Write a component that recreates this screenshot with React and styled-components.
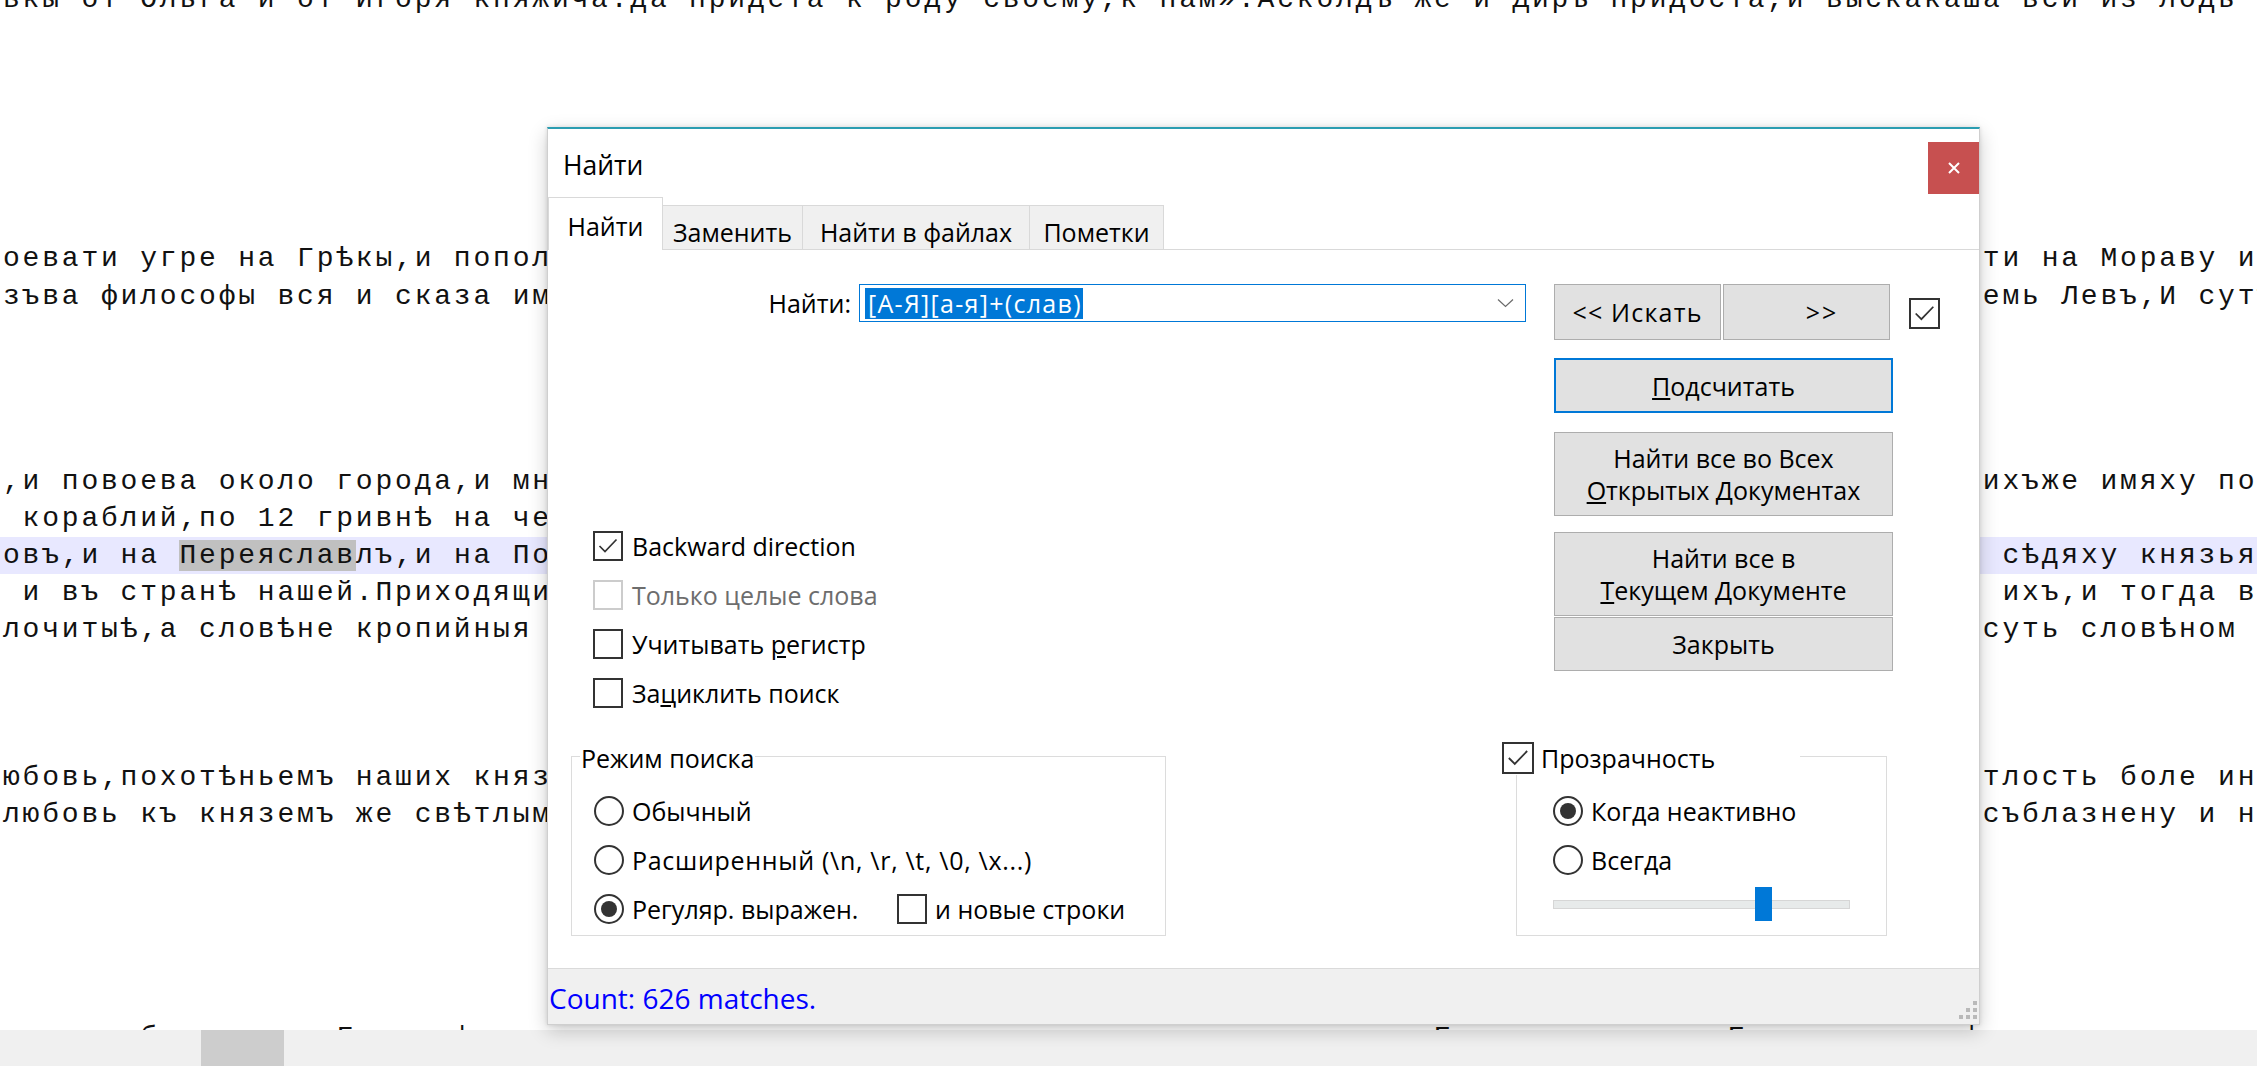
import React from "react";
import styled, { createGlobalStyle } from "styled-components";

const GlobalStyle = createGlobalStyle`
  html, body { margin: 0; padding: 0; width: 2257px; height: 1066px; overflow: hidden; background: #ffffff; }
  #root { width: 2257px; height: 1066px; }
  *, *::before, *::after { box-sizing: border-box; }
`;

/* ---------- editor (background) ---------- */
const CHAR = 19.6025;

const Screen = styled.div`
  position: relative;
  width: 2257px;
  height: 1066px;
  display: flex;
  flex-direction: column;
  overflow: hidden;
  background: #ffffff;
`;

const EditorText = styled.div`
  flex: 1;
  overflow: hidden;
  font-family: "Liberation Mono", "DejaVu Sans Mono", monospace;
  font-size: 28px;
  letter-spacing: 2.8px;
  color: #111111;
`;

const Lines = styled.div`
  margin-top: -19px;
`;

const Line = styled.div`
  height: 37.07px;
  line-height: 37.07px;
  white-space: pre;
  padding-left: 3px;
  background: ${(p) => (p.$current ? "#e8e8ff" : "transparent")};
`;

const Hidden = styled.span`
  display: inline-block;
  width: ${(p) => (p.$chars * CHAR).toFixed(3)}px;
`;

const Sel = styled.span`
  background: #c0c0c0;
`;

const HScroll = styled.div`
  flex: none;
  height: 36px;
  display: flex;
  background: #f0f0f0;
`;

const HThumb = styled.div`
  margin-left: 201px;
  width: 83px;
  background: #cdcdcd;
`;

/* ---------- dialog ---------- */
const Dialog = styled.div`
  position: absolute;
  left: 547px;
  top: 127px;
  width: 1433px;
  height: 898px;
  background: #ffffff;
  border: 1px solid #cfcfcf;
  border-top: 2px solid #2b9db1;
  box-shadow: 0 6px 18px rgba(0, 0, 0, 0.2), 0 0 4px rgba(0, 0, 0, 0.12);
  display: flex;
  flex-direction: column;
  font-family: "Open Sans", "Noto Sans", sans-serif;
  font-size: 25px;
  color: #000000;
`;

const TitleBar = styled.div`
  flex: none;
  height: 68px;
  display: flex;
  justify-content: space-between;
  align-items: flex-start;
`;

const Title = styled.div`
  margin: 18px 0 0 15px;
  font-size: 26.5px;
  line-height: 36px;
`;

const CloseBtn = styled.div`
  width: 51px;
  height: 52px;
  margin-top: 13px;
  background: #c75050;
  display: flex;
  align-items: center;
  justify-content: center;
`;

const TabStrip = styled.div`
  flex: none;
  height: 52px;
  display: flex;
  align-items: flex-end;
  position: relative;
  z-index: 1;
`;

const Tab = styled.div`
  width: ${(p) => p.$w}px;
  height: ${(p) => (p.$active ? 53 : 44)}px;
  margin-bottom: ${(p) => (p.$active ? -1 : 0)}px;
  padding-top: ${(p) => (p.$active ? 4 : 8)}px;
  background: ${(p) => (p.$active ? "#ffffff" : "#f0f0f0")};
  border-top: 1px solid #d9d9d9;
  border-right: 1px solid #d9d9d9;
  border-left: ${(p) => (p.$active ? "1px solid #d9d9d9" : "none")};
  display: flex;
  align-items: center;
  justify-content: center;
  line-height: 34px;
  white-space: nowrap;
`;

const Panel = styled.div`
  flex: none;
  height: 719px;
  border-top: 1px solid #d9d9d9;
  display: flex;
  flex-direction: column;
`;

const TopArea = styled.div`
  height: 467px;
  display: flex;
  align-items: flex-start;
`;

const LeftCol = styled.div`
  width: 978px;
  display: flex;
  flex-direction: column;
`;

const SearchRow = styled.div`
  margin-top: 34px;
  height: 38px;
  display: flex;
  align-items: center;
  gap: 8px;
`;

const FieldLabel = styled.div`
  width: 303px;
  text-align: right;
  line-height: 34px;
`;

const Combo = styled.div`
  width: 667px;
  height: 38px;
  border: 1px solid #0078d7;
  display: flex;
  align-items: center;
  justify-content: space-between;
  padding: 0 11px 0 5px;
`;

const Selected = styled.span`
  background: #0078d7;
  color: #ffffff;
  line-height: 31px;
  padding: 0 1px 0 3px;
  letter-spacing: 1.3px;
  white-space: pre;
`;

const CheckList = styled.div`
  margin-top: 199px;
  padding-left: 45px;
  display: flex;
  flex-direction: column;
`;

const OptionRow = styled.div`
  height: 49px;
  display: flex;
  align-items: center;
  gap: ${(p) => p.$gap ?? 9}px;
  color: ${(p) => (p.$disabled ? "#6d6d6d" : "#000000")};
  white-space: nowrap;
`;

const OptionText = styled.span`
  line-height: 34px;
  letter-spacing: ${(p) => p.$ls ?? 0}px;
  ${(p) => (p.$w ? `width: ${p.$w}px; flex: none;` : "")}
`;

const RightCol = styled.div`
  margin: 34px 0 0 28px;
  width: 339px;
  display: flex;
  flex-direction: column;
`;

const ButtonPair = styled.div`
  display: flex;
  gap: 2px;
`;

const Button = styled.div`
  width: ${(p) => p.$w ?? 339}px;
  height: ${(p) => p.$h}px;
  margin-top: ${(p) => p.$mt ?? 0}px;
  padding-left: ${(p) => p.$pl ?? 0}px;
  background: #e1e1e1;
  border: ${(p) => (p.$focused ? "2px solid #0078d7" : "1px solid #adadad")};
  display: flex;
  align-items: center;
  justify-content: center;
  text-align: center;
  line-height: 32px;
  letter-spacing: ${(p) => p.$ls ?? 0}px;
  white-space: nowrap;
  flex: none;
`;

const SideCheck = styled.div`
  margin: 48px 0 0 16px;
`;

const GroupsRow = styled.div`
  margin-top: 39px;
  display: flex;
  align-items: flex-start;
`;

const GroupBox = styled.div`
  position: relative;
  width: ${(p) => p.$w}px;
  height: 180px;
  margin-left: ${(p) => p.$ml}px;
  border: 1px solid #dcdcdc;
  padding: 29px 0 0 ${(p) => p.$pl}px;
  display: flex;
  flex-direction: column;
`;

const Legend = styled.div`
  position: absolute;
  top: -16px;
  left: ${(p) => p.$left}px;
  ${(p) => (p.$w ? `width: ${p.$w}px;` : "")}
  height: 34px;
  line-height: 34px;
  background: #ffffff;
  display: flex;
  align-items: center;
  gap: 7px;
  padding: 0 1px;
  white-space: nowrap;
`;

const RadioRing = styled.span`
  width: 30px;
  height: 30px;
  flex: none;
  border-radius: 50%;
  border: 2px solid #333333;
  background: #ffffff;
  display: inline-flex;
  align-items: center;
  justify-content: center;
`;

const RadioDot = styled.span`
  width: 16px;
  height: 16px;
  border-radius: 50%;
  background: #333333;
`;

const CheckFrame = styled.span`
  width: ${(p) => p.$size}px;
  height: ${(p) => p.$size}px;
  flex: none;
  border: 2px solid ${(p) => (p.$disabled ? "#cccccc" : "#333333")};
  background: #ffffff;
  display: inline-flex;
  align-items: center;
  justify-content: center;
`;

const Slider = styled.div`
  position: relative;
  margin-top: 3px;
  width: 297px;
  height: 34px;
  display: flex;
  align-items: center;
`;

const Track = styled.div`
  width: 100%;
  height: 9px;
  background: #e7eaea;
  border: 1px solid #d6d6d6;
`;

const Thumb = styled.div`
  position: absolute;
  top: 0;
  width: 17px;
  height: 34px;
  background: #0078d7;
`;

const StatusBar = styled.div`
  flex: 1;
  border-top: 1px solid #dadada;
  background: #f0f0f0;
  display: flex;
  justify-content: space-between;
  align-items: center;
  padding-left: 1px;
  color: #0000ff;
`;

const StatusText = styled.span`
  padding-top: 2px;
  font-size: 28px;
  line-height: 36px;
`;

const Grip = styled.svg`
  align-self: flex-end;
  margin: 0 2px 5px 0;
`;

/* ---------- small parts ---------- */
function CheckBox({ checked, disabled, size = 30 }) {
  const inner = size - 4;
  return (
    <CheckFrame $size={size} $disabled={disabled}>
      {checked && (
        <svg width={inner} height={inner} viewBox="0 0 26 26">
          <polyline points="4.5,13 10,18.5 21.5,6.5" fill="none" stroke="#333333" strokeWidth="1.7" />
        </svg>
      )}
    </CheckFrame>
  );
}

function Radio({ checked }) {
  return <RadioRing>{checked && <RadioDot />}</RadioRing>;
}

/* last (half hidden) editor line: mostly low letters, a few tall ones peek out above the scrollbar */
function sparseLine(total, marks) {
  const base = "таче и вси на нихъ, и рекоша к ним се и посла на вся страны и гради наша и сихъ ради ";
  let s = "";
  while (s.length < total) s += base;
  const chars = s.slice(0, total).split("");
  Object.entries(marks).forEach(([i, c]) => {
    chars[Number(i)] = c;
  });
  return chars.join("");
}

/* editor text: left part, then the columns hidden under the dialog, then the right part (starts at column 101) */
const RIGHT_COL = 101;

const LINES = [
  { full: "вкы от Ольга и от Игоря княжича.да придета к роду своему,к нам».Асколдъ же и Диръ придоста,и выскакаша вси из лодь" },
  {}, {}, {}, {}, {}, {},
  { left: "оевати угре на Грѣкы,и попол", right: "ти на Мораву и Чехы" },
  { left: "зъва философы вся и сказа им", right: "емь Левъ,И сутъ" },
  {}, {}, {}, {},
  { left: ",и повоева около города,и мн", right: "ихъже имяху по" },
  { left: " кораблий,по 12 гривнѣ на че" },
  { left: ["овъ,и на ", "Переяслав", "лъ,и на По"], right: " сѣдяху князья", current: true },
  { left: " и въ странѣ нашей.Приходящи", right: " ихъ,и тогда вс" },
  { left: "лочитыѣ,а словѣне кропийныя ", right: "суть словѣном и" },
  {}, {}, {},
  { left: "юбовь,похотѣньемъ наших княз", right: "тлость боле инѣх" },
  { left: "любовь къ княземъ же свѣтлым", right: "съблазнену и на" },
  {}, {}, {}, {}, {},
  { full: sparseLine(116, { 7: "б", 17: "Г", 23: "ф", 73: "Б", 88: "Б", 100: "ф" }) },
];

function EditorLine({ line }) {
  if (line.full) return <Line>{line.full}</Line>;
  if (!line.left) return <Line> </Line>;
  const isArr = Array.isArray(line.left);
  const leftLen = isArr ? line.left.join("").length : line.left.length;
  return (
    <Line $current={line.current}>
      {isArr ? (
        <>
          {line.left[0]}
          <Sel>{line.left[1]}</Sel>
          {line.left[2]}
        </>
      ) : (
        line.left
      )}
      {line.right && (
        <>
          <Hidden $chars={RIGHT_COL - leftLen} />
          {line.right}
        </>
      )}
    </Line>
  );
}

const TABS = [
  { label: "Найти", w: 115, active: true },
  { label: "Заменить", w: 140 },
  { label: "Найти в файлах", w: 227 },
  { label: "Пометки", w: 134 },
];

const SLIDER_VALUE = 72;

export default function App() {
  return (
    <Screen>
      <GlobalStyle />
      <EditorText>
        <Lines>
          {LINES.map((l, i) => (
            <EditorLine key={i} line={l} />
          ))}
        </Lines>
      </EditorText>
      <HScroll>
        <HThumb />
      </HScroll>

      <Dialog>
        <TitleBar>
          <Title>Найти</Title>
          <CloseBtn>
            <svg width="12" height="12" viewBox="0 0 12 12">
              <path d="M1 1 L11 11 M11 1 L1 11" stroke="#ffffff" strokeWidth="2" />
            </svg>
          </CloseBtn>
        </TitleBar>

        <TabStrip>
          {TABS.map((t) => (
            <Tab key={t.label} $w={t.w} $active={t.active}>
              {t.label}
            </Tab>
          ))}
        </TabStrip>

        <Panel>
          <TopArea>
            <LeftCol>
              <SearchRow>
                <FieldLabel>Найти:</FieldLabel>
                <Combo>
                  <Selected>[А-Я][а-я]+(слав)</Selected>
                  <svg width="17" height="10" viewBox="0 0 17 10">
                    <polyline points="1,1.5 8.5,8.5 16,1.5" fill="none" stroke="#6a6a6a" strokeWidth="1.2" />
                  </svg>
                </Combo>
              </SearchRow>
              <CheckList>
                <OptionRow>
                  <CheckBox checked />
                  <OptionText>Backward direction</OptionText>
                </OptionRow>
                <OptionRow $disabled>
                  <CheckBox disabled />
                  <OptionText>Только целые слова</OptionText>
                </OptionRow>
                <OptionRow>
                  <CheckBox />
                  <OptionText>
                    Учитывать <u>р</u>егистр
                  </OptionText>
                </OptionRow>
                <OptionRow>
                  <CheckBox />
                  <OptionText>
                    За<u>ц</u>иклить поиск
                  </OptionText>
                </OptionRow>
              </CheckList>
            </LeftCol>

            <RightCol>
              <ButtonPair>
                <Button $w={167} $h={56} $ls={1.2}>
                  {"<< Искать"}
                </Button>
                <Button $w={167} $h={56} $pl={31} $ls={2}>
                  {">>"}
                </Button>
              </ButtonPair>
              <Button $h={55} $mt={18} $focused>
                <span>
                  <u>П</u>одсчитать
                </span>
              </Button>
              <Button $h={84} $mt={19}>
                <span>
                  Найти все во Всех
                  <br />
                  <u>О</u>ткрытых Документах
                </span>
              </Button>
              <Button $h={84} $mt={16}>
                <span>
                  Найти все в
                  <br />
                  <u>Т</u>екущем Документе
                </span>
              </Button>
              <Button $h={54} $mt={1}>
                Закрыть
              </Button>
            </RightCol>

            <SideCheck>
              <CheckBox checked size={31} />
            </SideCheck>
          </TopArea>

          <GroupsRow>
            <GroupBox $w={595} $ml={23} $pl={22}>
              <Legend $left={8}>Режим поиска</Legend>
              <OptionRow $gap={8}>
                <Radio />
                <OptionText>Обычный</OptionText>
              </OptionRow>
              <OptionRow $gap={8}>
                <Radio />
                <OptionText $ls={0.7}>{"Расширенный (\\n, \\r, \\t, \\0, \\x...)"}</OptionText>
              </OptionRow>
              <OptionRow $gap={8}>
                <Radio checked />
                <OptionText $w={257}>Регуляр. выражен.</OptionText>
                <CheckBox />
                <OptionText>и новые строки</OptionText>
              </OptionRow>
            </GroupBox>

            <GroupBox $w={371} $ml={350} $pl={36}>
              <Legend $left={-16} $w={299}>
                <CheckBox checked size={32} />
                <span>Прозрачность</span>
              </Legend>
              <OptionRow $gap={8}>
                <Radio checked />
                <OptionText>Когда неактивно</OptionText>
              </OptionRow>
              <OptionRow $gap={8}>
                <Radio />
                <OptionText>Всегда</OptionText>
              </OptionRow>
              <Slider>
                <Track />
                <Thumb style={{ left: `${(SLIDER_VALUE / 100) * (297 - 17)}px` }} />
              </Slider>
            </GroupBox>
          </GroupsRow>
        </Panel>

        <StatusBar>
          <StatusText>Count: 626 matches.</StatusText>
          <Grip width="20" height="18" viewBox="0 0 20 18">
            <g fill="#b9b9b9">
              <rect x="16" y="0" width="4" height="4" />
              <rect x="9" y="7" width="4" height="4" />
              <rect x="16" y="7" width="4" height="4" />
              <rect x="2" y="14" width="4" height="4" />
              <rect x="9" y="14" width="4" height="4" />
              <rect x="16" y="14" width="4" height="4" />
            </g>
          </Grip>
        </StatusBar>
      </Dialog>
    </Screen>
  );
}
